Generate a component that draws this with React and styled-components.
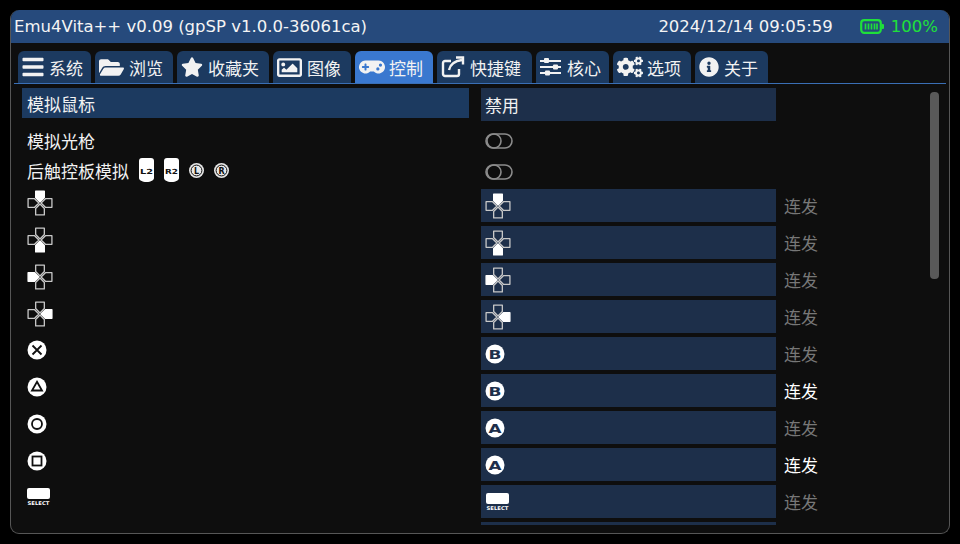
import React from "react";
import styled, { createGlobalStyle } from "styled-components";
import {
  FaBars,
  FaFolderOpen,
  FaStar,
  FaRegImage,
  FaGamepad,
  FaCogs,
  FaInfoCircle,
} from "react-icons/fa";

const GlobalStyle = createGlobalStyle`
  html, body {
    margin: 0;
    padding: 0;
    background: #000;
  }
  body {
    font-family: "Noto Sans CJK SC", "Noto Sans", sans-serif;
    color: #f2f2f2;
  }
`;

const Screen = styled.div`
  width: 960px;
  height: 544px;
  padding: 10px;
  box-sizing: border-box;
  background: #000;
  overflow: hidden;
`;

const Frame = styled.div`
  height: 524px;
  display: flex;
  flex-direction: column;
  background: #0e0e0e;
  border: 1px solid #565656;
  border-top: 0;
  border-radius: 9px;
  box-sizing: border-box;
  overflow: hidden;
`;

const Header = styled.header`
  height: 33px;
  flex: none;
  margin: 0 -1px;
  padding: 0 12px 0 4px;
  display: flex;
  align-items: center;
  background: #264a7c;
  font-family: "DejaVu Sans", sans-serif;
  font-size: 16.5px;
  color: #f4f4f4;
`;

const Title = styled.div`
  flex: 1;
  white-space: nowrap;
`;

const Clock = styled.div`
  margin-right: 27px;
`;

const Battery = styled.div`
  display: flex;
  align-items: center;
  gap: 7px;
  color: #1fe03a;
`;

const TabBar = styled.nav`
  height: 32px;
  flex: none;
  margin: 8px 3px 0 3px;
  padding: 0 0 0 4px;
  display: flex;
  gap: 4px;
  border-bottom: 1px solid #3a6fb5;
`;

const Tab = styled.div`
  width: ${(p) => p.$width}px;
  display: flex;
  align-items: center;
  gap: 5px;
  padding-left: 4px;
  box-sizing: border-box;
  border-radius: 6px 6px 0 0;
  background: ${(p) => (p.$active ? "#3a78cf" : "#1c3a60")};
  font-size: 17px;
  white-space: nowrap;
  svg {
    flex: none;
  }
`;

const TabIcon = styled.span`
  width: ${(p) => p.$width}px;
  display: flex;
  justify-content: center;
`;

const Content = styled.div`
  flex: 1;
  min-height: 0;
  position: relative;
  overflow: hidden;
  margin-bottom: 8px;
`;

const List = styled.div`
  padding: 4px 0 0 11px;
`;

const Row = styled.div`
  display: grid;
  grid-template-columns: 447px 295px 70px;
  column-gap: 12px;
  height: ${(p) => p.$height || 33}px;
  margin-bottom: ${(p) => (p.$tight ? 0 : 4)}px;
  font-size: 17px;
`;

const Label = styled.div`
  display: flex;
  align-items: ${(p) => (p.$bar ? "center" : "flex-start")};
  height: ${(p) => (p.$bar ? "30px" : "auto")};
  padding-left: ${(p) => (p.$select ? "4px" : "5px")};
  padding-top: ${(p) => p.$top || 0}px;
  background: ${(p) => (p.$bar ? "#1c3a60" : "transparent")};
  gap: 10px;
  box-sizing: border-box;
`;

const Value = styled.div`
  display: flex;
  align-items: center;
  padding-left: ${(p) => (p.$select ? "4px" : "4px")};
  background: ${(p) => (p.$bar ? "#1d2f4a" : "transparent")};
`;

const Turbo = styled.div`
  display: flex;
  align-items: center;
  margin-left: -4px;
  color: ${(p) => (p.$on ? "#ffffff" : "#777777")};
`;

const Hints = styled.span`
  display: flex;
  align-items: center;
  gap: 10px;
  height: 24px;
`;

const Scrollbar = styled.div`
  position: absolute;
  top: 8px;
  right: 10px;
  width: 9px;
  height: 187px;
  border-radius: 4px;
  background: #595959;
`;

const ExternalIcon = () => (
  <svg width="24" height="22" viewBox="0 0 24 22" fill="none" stroke="#f2f2f2" strokeWidth="2.4">
    <path d="M18 13v5a2 2 0 0 1-2 2H4a2 2 0 0 1-2-2V7a2 2 0 0 1 2-2h6" />
    <path d="M8 14c1-5 5-9 13-10" />
    <path d="M15 1.5h7v7" strokeLinejoin="miter" />
  </svg>
);

const SlidersIcon = () => (
  <svg width="22" height="20" viewBox="0 0 22 20" fill="#f2f2f2">
    <rect x="0" y="3" width="21" height="2" />
    <rect x="0" y="9" width="21" height="2" />
    <rect x="0" y="15" width="21" height="2" />
    <rect x="4" y="1" width="5" height="5" rx="1" />
    <rect x="13" y="7.5" width="5" height="5" rx="1" />
    <rect x="5" y="13.5" width="5" height="5" rx="1" />
  </svg>
);

const BatteryIcon = () => (
  <svg width="24" height="18" viewBox="0 0 24 18" fill="none">
    <rect x="1.2" y="2.2" width="19.6" height="12.6" rx="3" stroke="#1fe03a" strokeWidth="2.2" />
    <rect x="21.5" y="6" width="2.5" height="5" rx="1" fill="#1fe03a" />
    <path d="M5.5 5.5v6M8.5 5.5v6M11.5 5.5v6M14.5 5.5v6M17 5.5v6" stroke="#1fe03a" strokeWidth="1.7" />
  </svg>
);

const ToggleIcon = () => (
  <svg width="28" height="18" viewBox="0 0 28 18" fill="none" stroke="#8c8c8c" strokeWidth="1.6">
    <rect x="1" y="2" width="26" height="14" rx="7" />
    <circle cx="9" cy="9" r="7" />
  </svg>
);

// one arm of the dpad, filled when it is the highlighted direction
const DpadIcon = ({ on }) => {
  const arms = {
    up: "M8 1h8v6l-4 4-4-4z",
    down: "M8 23h8v-6l-4-4-4 4z",
    left: "M1 8v8h6l4-4-4-4z",
    right: "M23 8v8h-6l-4-4 4-4z",
  };
  return (
    <svg width="26" height="26" viewBox="0 0 24 24" strokeWidth="1.2" strokeLinejoin="round">
      {Object.entries(arms).map(([name, d]) => (
        <path
          key={name}
          d={d}
          fill={name === on ? "#fff" : "none"}
          stroke={name === on ? "#fff" : "#c8c8c8"}
        />
      ))}
    </svg>
  );
};

const FaceIcon = ({ kind }) => (
  <svg width="20" height="20" viewBox="0 0 20 20">
    <circle cx="10" cy="10" r="9.5" fill="#fff" />
    <g fill="none" stroke="#101010" strokeWidth="1.8">
      {kind === "cross" && <path d="M5.5 5.5l9 9M14.5 5.5l-9 9" />}
      {kind === "triangle" && <path d="M10 4.8l5 8.7H5z" />}
      {kind === "circle" && <circle cx="10" cy="10" r="5" />}
      {kind === "square" && <rect x="5.5" y="5.5" width="9" height="9" />}
    </g>
  </svg>
);

const LetterIcon = ({ letter }) => (
  <svg width="20" height="20" viewBox="0 0 20 20">
    <circle cx="10" cy="10" r="9.5" fill="#fff" />
    <text
      x="10"
      y="14.5"
      textAnchor="middle"
      fontFamily="DejaVu Sans"
      fontWeight="bold"
      fontSize="12"
      fill="#1d2f4a"
      textLength="13"
      lengthAdjust="spacingAndGlyphs"
    >
      {letter}
    </text>
  </svg>
);

const SelectIcon = () => (
  <svg width="26" height="18" viewBox="0 0 26 18">
    <rect x="1" y="0" width="23" height="11" rx="2" fill="#fff" />
    <text
      x="12.5"
      y="17"
      textAnchor="middle"
      fontFamily="DejaVu Sans"
      fontWeight="bold"
      fontSize="5"
      fill="#fff"
      textLength="22"
      lengthAdjust="spacingAndGlyphs"
    >
      SELECT
    </text>
  </svg>
);

const ShoulderIcon = ({ text }) => (
  <svg width="15" height="24" viewBox="0 0 15 24">
    <path d="M0 3a3 3 0 0 1 3-3h9a3 3 0 0 1 3 3v17c0 2-3 4-7.5 4S0 22 0 20z" fill="#fff" />
    <text
      x="7.5"
      y="16"
      textAnchor="middle"
      fontFamily="DejaVu Sans"
      fontWeight="bold"
      fontSize="7"
      fill="#101010"
      textLength="13"
      lengthAdjust="spacingAndGlyphs"
    >
      {text}
    </text>
  </svg>
);

const RingIcon = ({ text }) => (
  <svg width="15" height="15" viewBox="0 0 15 15">
    <circle cx="7.5" cy="7.5" r="7.5" fill="#e8e8e8" />
    <circle cx="7.5" cy="7.5" r="5.4" fill="none" stroke="#101010" strokeWidth="1" />
    <text x="7.5" y="10.5" textAnchor="middle" fontFamily="DejaVu Sans" fontWeight="bold" fontSize="8" fill="#101010">
      {text}
    </text>
  </svg>
);

const tabs = [
  { label: "系统", width: 73, iconWidth: 22, icon: <FaBars size={24} /> },
  { label: "浏览", width: 78, iconWidth: 25, icon: <FaFolderOpen size={25} /> },
  { label: "收藏夹", width: 92, iconWidth: 22, icon: <FaStar size={22} /> },
  { label: "图像", width: 78, iconWidth: 25, icon: <FaRegImage size={25} /> },
  { label: "控制", width: 78, iconWidth: 25, icon: <FaGamepad size={26} />, active: true },
  { label: "快捷键", width: 95, iconWidth: 24, icon: <ExternalIcon /> },
  { label: "核心", width: 73, iconWidth: 22, icon: <SlidersIcon /> },
  { label: "选项", width: 78, iconWidth: 25, icon: <FaCogs size={26} /> },
  { label: "关于", width: 73, iconWidth: 20, icon: <FaInfoCircle size={20} /> },
];

const keys = [
  { left: <DpadIcon on="up" />, right: <DpadIcon on="up" /> },
  { left: <DpadIcon on="down" />, right: <DpadIcon on="down" /> },
  { left: <DpadIcon on="left" />, right: <DpadIcon on="left" /> },
  { left: <DpadIcon on="right" />, right: <DpadIcon on="right" /> },
  { left: <FaceIcon kind="cross" />, right: <LetterIcon letter="B" />, top: 3 },
  { left: <FaceIcon kind="triangle" />, right: <LetterIcon letter="B" />, top: 3, on: true },
  { left: <FaceIcon kind="circle" />, right: <LetterIcon letter="A" />, top: 3 },
  { left: <FaceIcon kind="square" />, right: <LetterIcon letter="A" />, top: 3, on: true },
  { left: <SelectIcon />, right: <SelectIcon />, top: 3, select: true },
];

export default function App() {
  return (
    <Screen>
      <GlobalStyle />
      <Frame>
        <Header>
          <Title>Emu4Vita++ v0.09 (gpSP v1.0.0-36061ca)</Title>
          <Clock>2024/12/14 09:05:59</Clock>
          <Battery>
            <BatteryIcon />
            100%
          </Battery>
        </Header>
        <TabBar>
          {tabs.map((tab) => (
            <Tab key={tab.label} $width={tab.width} $active={tab.active}>
              <TabIcon $width={tab.iconWidth}>{tab.icon}</TabIcon>
              {tab.label}
            </Tab>
          ))}
        </TabBar>
        <Content>
          <List>
            <Row>
              <Label $bar>模拟鼠标</Label>
              <Value $bar>禁用</Value>
            </Row>
            <Row $height={31} $tight>
              <Label $top={3}>模拟光枪</Label>
              <Value>
                <ToggleIcon />
              </Value>
            </Row>
            <Row $height={31} $tight>
              <Label $top={2}>
                后触控板模拟
                <Hints>
                  <ShoulderIcon text="L2" />
                  <ShoulderIcon text="R2" />
                  <RingIcon text="L" />
                  <RingIcon text="R" />
                </Hints>
              </Label>
              <Value>
                <ToggleIcon />
              </Value>
            </Row>
            <Row $height={2} $tight />
            {keys.map((key, i) => (
              <Row key={i}>
                <Label $top={key.top || 1} $select={key.select}>
                  {key.left}
                </Label>
                <Value $bar $select={key.select}>
                  {key.right}
                </Value>
                <Turbo $on={key.on}>连发</Turbo>
              </Row>
            ))}
            <Row>
              <Label />
              <Value $bar />
            </Row>
          </List>
          <Scrollbar />
        </Content>
      </Frame>
    </Screen>
  );
}
